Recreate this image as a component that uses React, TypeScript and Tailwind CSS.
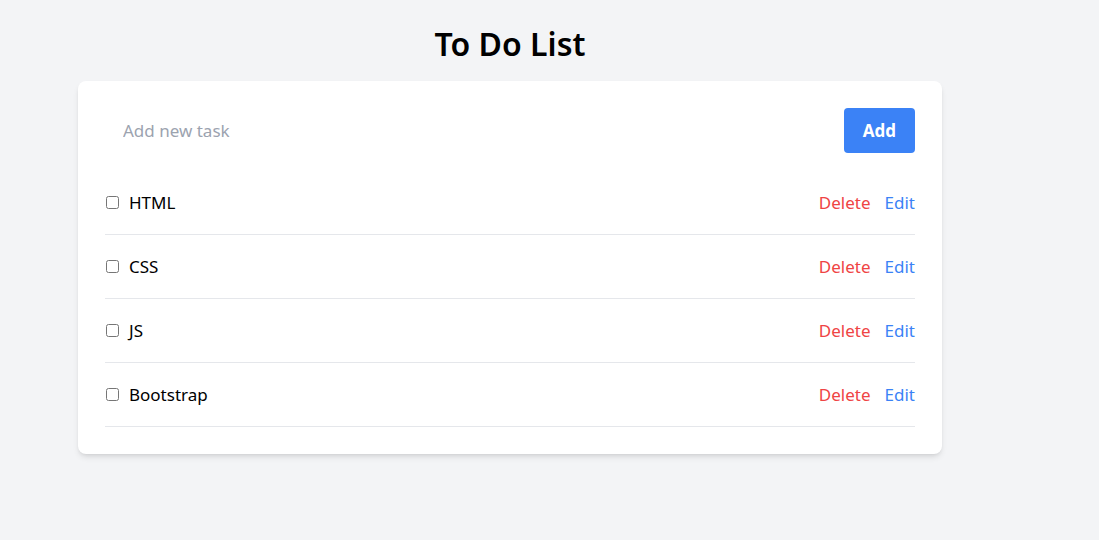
import { useState } from "react";

const initial = ["HTML", "CSS", "JS", "Bootstrap"];

export default function App() {
    const [tasks, setTasks] = useState(initial);
    const [text, setText] = useState("");

    const add = () => {
        if (!text.trim()) return;
        setTasks([...tasks, text.trim()]);
        setText("");
    };

    return (
        <div className="min-h-screen bg-[#f3f4f6] pt-[20px] font-['Noto_Sans',sans-serif] text-black">
            <div className="w-[864px] ml-[78px]">
                <h1 className="text-center text-[32px] leading-[48px] font-semibold mb-[13px]">To Do List</h1>

                {/* Card */}
                <div className="bg-white rounded-lg shadow-md px-[27px] pt-[27px] pb-[27px]">
                    <div className="flex items-center gap-4 mb-[18px]">
                        <input
                            value={text}
                            onChange={(e) => setText(e.target.value)}
                            placeholder="Add new task"
                            className="flex-1 h-[45px] px-[18px] text-[17px] outline-none placeholder:text-[#9ca3af]"
                        />
                        <button
                            onClick={add}
                            className="w-[71px] h-[45px] rounded bg-[#3b82f6] text-white text-[17px] font-bold"
                        >
                            Add
                        </button>
                    </div>

                    <ul>
                        {tasks.map((t, i) => (
                            <li key={i} className="flex items-center h-[64px] border-b border-[#e5e7eb] text-[17px]">
                                <input type="checkbox" className="w-[13px] h-[13px] ml-px mr-[10px]" />
                                <span className="flex-1">{t}</span>
                                <button
                                    onClick={() => setTasks(tasks.filter((_, j) => j !== i))}
                                    className="text-[#ef4444] mr-[14px]"
                                >
                                    Delete
                                </button>
                                <button className="text-[#3b82f6]">Edit</button>
                            </li>
                        ))}
                    </ul>
                </div>
            </div>
        </div>
    );
}
